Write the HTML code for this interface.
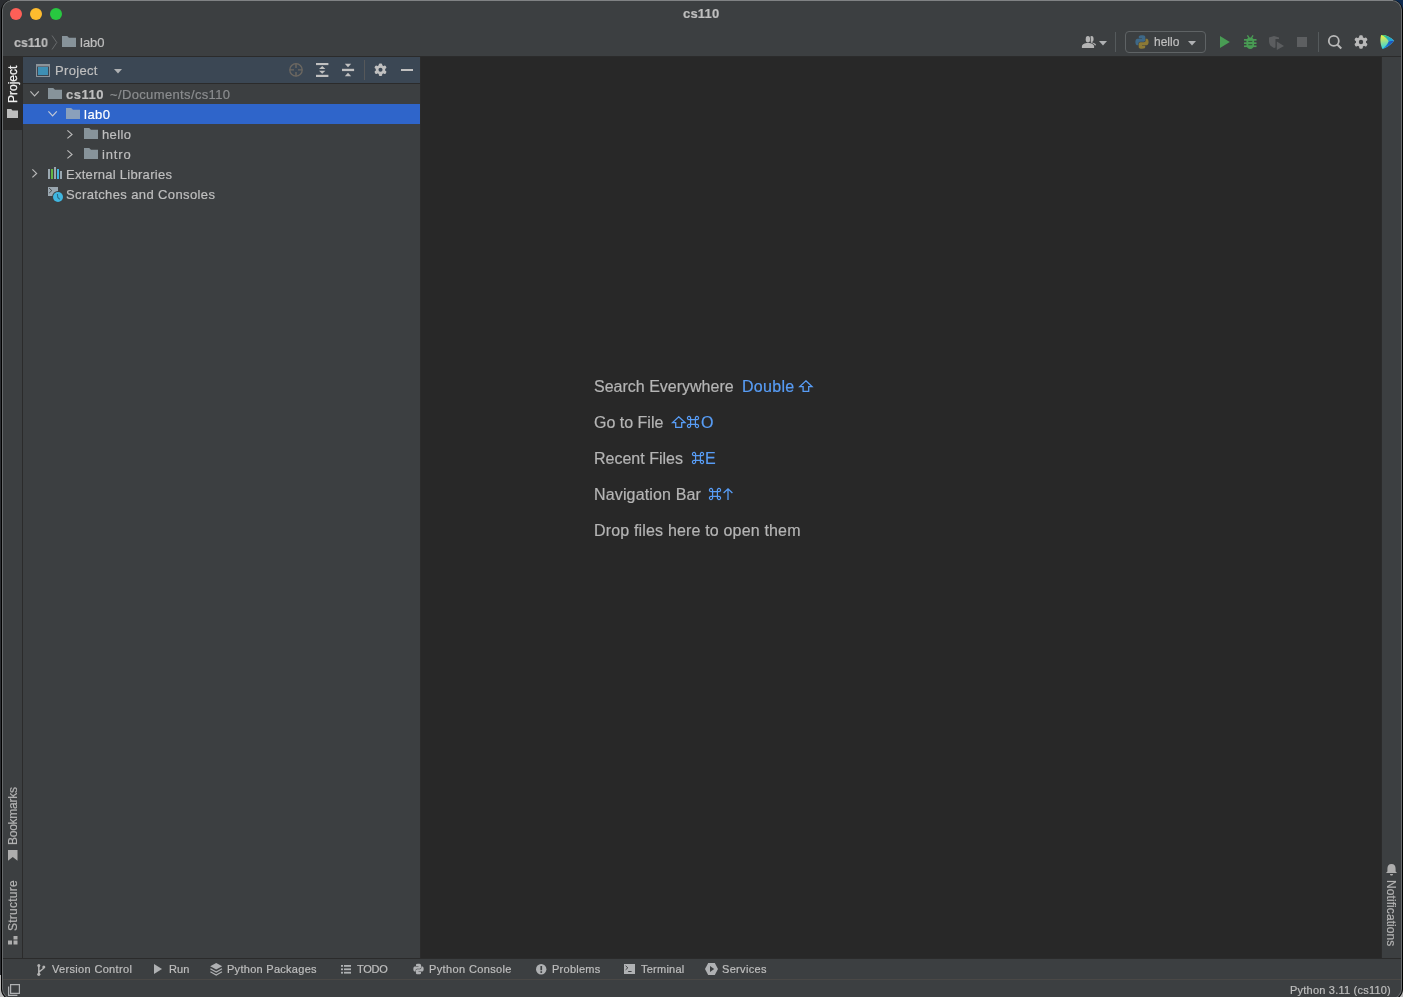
<!DOCTYPE html>
<html><head><meta charset="utf-8">
<style>
*{margin:0;padding:0;box-sizing:border-box}
html,body{width:1403px;height:997px;overflow:hidden;background:#2a2c30;font-family:"Liberation Sans",sans-serif;position:relative}
.r{position:absolute}
.t{position:absolute;white-space:nowrap;color:#bfbfbf;line-height:1;will-change:transform;-webkit-text-stroke:0.2px currentColor}
.s11{font-size:11px}
.s13{font-size:13px}
.s16{font-size:16px}
.bl{color:#589df6}
svg{position:absolute;overflow:visible}
</style></head><body>
<!-- desktop edge bits -->
<div class="r" style="left:0;top:975px;width:1403px;height:22px;background:#b9b9b9"></div>
<div class="r" style="left:1380px;top:0;width:23px;height:20px;background:#0d2a4f"></div>
<!-- window frame -->
<div class="r" style="left:1px;top:0;width:1402px;height:1000px;background:#000;border-radius:11px"></div>
<div class="r" style="left:2px;top:0;width:1400px;height:999px;background:#66696b;border-radius:10px"></div>
<div class="r" style="left:3px;top:1px;width:1398px;height:997px;background:#3c3f41;border-radius:9px"></div>
<div class="r" style="left:10px;top:0;width:1383px;height:1px;background:#808284"></div>

<!-- traffic lights -->
<svg style="left:0;top:0" width="80" height="28">
  <circle cx="16" cy="14" r="6" fill="#fe5f57"/>
  <circle cx="36" cy="14" r="6" fill="#febc2e"/>
  <circle cx="56" cy="14" r="6" fill="#28c840"/>
</svg>
<div class="t s13" style="left:683px;top:7px;font-weight:bold;letter-spacing:0.2px">cs110</div>

<!-- nav bar -->
<div class="t s13" style="left:14px;top:36px;font-weight:bold;transform:scaleX(0.957);transform-origin:0 0">cs110</div>
<svg style="left:51px;top:35px" width="8" height="16"><path d="M1 0.5 L5.8 7.5 L1 14.5" fill="none" stroke="#686b6d" stroke-width="1"/></svg>
<svg style="left:62px;top:36px" width="14" height="11"><path d="M0 0 H5.2 L7 1.8 H14 V11 H0 Z" fill="#87939a"/></svg>
<div class="t s13" style="left:80px;top:36px">lab0</div>

<!-- toolbar right -->
<svg style="left:1081px;top:36px" width="16" height="12" viewBox="0 0 16 12">
  <ellipse cx="10.7" cy="3" rx="1.9" ry="3" fill="#b4b4b4"/>
  <path d="M10.7 5 C10.7 6 11 6.3 12 6.7 C14 7.4 15 8 15 9.3 L13 9.5 L9 8 Z" fill="#b4b4b4"/>
  <ellipse cx="6.9" cy="3.2" rx="2.9" ry="3.9" fill="#3c3f41"/>
  <path d="M0.1 12.8 V10.5 C0.1 8 3 6.3 7 6.3 C11 6.3 13.9 8 13.9 10.5 V12.8 Z" fill="#3c3f41"/>
  <ellipse cx="6.9" cy="3.2" rx="2.2" ry="3.2" fill="#b4b4b4"/>
  <path d="M0.9 12 V10.5 C0.9 8.5 3.5 7.1 7 7.1 C10.5 7.1 13.1 8.5 13.1 10.5 V12 Z" fill="#b4b4b4"/>
</svg>
<svg style="left:1099px;top:41px" width="8" height="5"><path d="M0 0 H8 L4 4.5 Z" fill="#afb1b3"/></svg>
<div class="r" style="left:1115px;top:32px;width:1px;height:20px;background:#555a5c"></div>
<div class="r" style="left:1125px;top:31px;width:81px;height:22px;border:1px solid #5f6365;border-radius:4px"></div>
<svg style="left:1135px;top:35px" width="14" height="14" viewBox="0 0 14 14">
  <path d="M6.9 0.3 c-3.3 0 -3.1 1.4 -3.1 1.4 v1.5 h3.2 v0.5 H2.6 c0 0 -2.2 -0.2 -2.2 3.2 c0 3.4 1.9 3.3 1.9 3.3 h1.1 V8.6 c0 0 -0.1 -1.9 1.9 -1.9 h3.2 c0 0 1.8 0 1.8 -1.8 V2 c0 0 0.3 -1.7 -3.4 -1.7z" fill="#3e6887"/>
  <path d="M7.1 13.7 c3.3 0 3.1 -1.4 3.1 -1.4 v-1.5 H7 v-0.5 h4.4 c0 0 2.2 0.2 2.2 -3.2 c0 -3.4 -1.9 -3.3 -1.9 -3.3 h-1.1 v1.6 c0 0 0.1 1.9 -1.9 1.9 H5.5 c0 0 -1.8 0 -1.8 1.8 V12 c0 0 -0.3 1.7 3.4 1.7z" fill="#8b7936"/>
</svg>
<div class="t" style="font-size:12px;left:1153.5px;top:36px">hello</div>
<svg style="left:1188px;top:41px" width="8" height="5"><path d="M0 0 H8 L4 4.5 Z" fill="#afb1b3"/></svg>
<svg style="left:1220px;top:36px" width="10" height="12"><path d="M0 0 L9.8 6 L0 12 Z" fill="#499c54"/></svg>
<svg style="left:1244px;top:35px" width="13" height="14" viewBox="0 0 13 14">
  <path d="M3.4 0.4 L5.2 3.2 M9.1 0.4 L7.3 3.2" stroke="#499c54" stroke-width="1.3" fill="none"/>
  <path d="M6.25 2.6 C8.7 2.6 10.1 4 10.1 5.8 V10 C10.1 12.3 8.4 14 6.25 14 C4.1 14 2.4 12.3 2.4 10 V5.8 C2.4 4 3.8 2.6 6.25 2.6Z" fill="#499c54"/>
  <rect x="0" y="4" width="12.5" height="1.7" fill="#499c54"/>
  <rect x="0" y="7.3" width="12.5" height="1.7" fill="#499c54"/>
  <rect x="0" y="10.4" width="12.5" height="1.7" fill="#499c54"/>
  <rect x="4.3" y="5.9" width="4" height="1.1" fill="#35573b"/>
  <rect x="4.3" y="9.1" width="4" height="1.1" fill="#35573b"/>
</svg>
<svg style="left:1269px;top:36px" width="15" height="14" viewBox="0 0 15 14">
  <path d="M0 1.5 L5 0 L10 1.5 V3 H6.5 V11.5 L5 12 C2 10.8 0 8.5 0 5.2 Z" fill="#5b5d5f"/>
  <path d="M7.8 5.6 L15 10 L7.8 14 Z" fill="#5b5d5f"/>
</svg>
<div class="r" style="left:1297px;top:37px;width:10px;height:10px;background:#5d5f61"></div>
<div class="r" style="left:1318px;top:32px;width:1px;height:20px;background:#555a5c"></div>
<svg style="left:1327px;top:34px" width="16" height="16" viewBox="0 0 16 16">
  <circle cx="6.8" cy="6.9" r="5" fill="none" stroke="#b9b9b9" stroke-width="1.8"/>
  <path d="M10.3 10.5 L14.3 14.5" stroke="#b9b9b9" stroke-width="2"/>
</svg>
<svg style="left:1354px;top:35px" width="14" height="14" viewBox="0 0 14 14">
  <g fill="#b9b9b9"><circle cx="7" cy="7" r="5.1"/>
  <rect x="5.2" y="0.2" width="3.6" height="13.6" rx="1.2"/>
  <rect x="5.2" y="0.2" width="3.6" height="13.6" rx="1.2" transform="rotate(60 7 7)"/>
  <rect x="5.2" y="0.2" width="3.6" height="13.6" rx="1.2" transform="rotate(120 7 7)"/></g>
  <circle cx="7" cy="7" r="2.2" fill="#3c3f41"/>
</svg>
<svg style="left:1380px;top:34px" width="15" height="15" viewBox="0 0 15 15">
  <defs>
    <linearGradient id="lg1" x1="0.2" y1="0" x2="0.4" y2="1"><stop offset="0" stop-color="#f2f03c"/><stop offset="0.45" stop-color="#9be08a"/><stop offset="1" stop-color="#20d0e8"/></linearGradient>
    <linearGradient id="lg2" x1="0" y1="0" x2="1" y2="0.6"><stop offset="0" stop-color="#30d070"/><stop offset="1" stop-color="#1a9be8"/></linearGradient>
    <linearGradient id="lg3" x1="1" y1="0" x2="0" y2="1"><stop offset="0" stop-color="#1d48b8"/><stop offset="1" stop-color="#1890e0"/></linearGradient>
  </defs>
  <path d="M1.2 1 C5 0.5 10 2.5 14.2 6.8 C10.5 11 6.5 14 2.5 15 C0.4 11 -0.3 5 1.2 1Z" fill="url(#lg1)"/>
  <path d="M1.2 1 C5 0.5 10 2.5 14.2 6.8 L8.7 7.2 C7 4.5 4.5 2 1.2 1Z" fill="url(#lg2)"/>
  <path d="M14.2 6.8 C10.5 11 6.5 14 2.5 15 C5.5 12.5 7.8 10 8.7 7.2Z" fill="url(#lg3)"/>
</svg>

<!-- top line under nav -->
<div class="r" style="left:3px;top:56px;width:1398px;height:1px;background:#2b2b2b"></div>

<!-- left stripe -->
<div class="r" style="left:3px;top:57px;width:19px;height:73px;background:#2c2c2c"></div>
<div class="r" style="left:22px;top:57px;width:1px;height:901px;background:#2b2b2b"></div>
<div class="t" style="font-size:12px;left:6.8px;top:103px;color:#f0f0f0;-webkit-text-stroke:0.25px #f0f0f0;transform:rotate(-90deg);transform-origin:0 0">Project</div>
<svg style="left:7px;top:109px" width="11" height="9"><path d="M0 0 H4.2 L5.5 1.6 H11 V9 H0 Z" fill="#bdbdbd"/></svg>

<div class="t" style="font-size:12px;left:6.6px;top:844.8px;color:#b3b3b3;letter-spacing:-0.25px;transform:rotate(-90deg);transform-origin:0 0">Bookmarks</div>
<svg style="left:7.6px;top:850px" width="10" height="11" viewBox="0 0 10 11"><path d="M0 0 H9.5 V10.7 L4.75 7 L0 10.7 Z" fill="#adadad"/></svg>
<div class="t" style="font-size:12px;left:6.6px;top:931px;color:#b3b3b3;letter-spacing:0.25px;transform:rotate(-90deg);transform-origin:0 0">Structure</div>
<svg style="left:8px;top:935px" width="10" height="10"><rect x="0" y="5.5" width="4" height="4" fill="#adadad"/><rect x="5.5" y="5.5" width="4" height="4" fill="#adadad"/><rect x="5.5" y="1" width="4" height="3.5" fill="#adadad"/></svg>

<!-- project panel header -->
<div class="r" style="left:23px;top:57px;width:397px;height:26px;background:#3b4754"></div>
<div class="r" style="left:23px;top:83px;width:397px;height:1px;background:#2b2b2b"></div>
<svg style="left:36px;top:64px" width="14" height="13"><rect x="0.5" y="0.5" width="13" height="12" fill="none" stroke="#8c9399"/><rect x="1" y="1" width="12" height="1.5" fill="#8c9399"/><rect x="2" y="3" width="10" height="8" fill="#3e8fb4"/></svg>
<div class="t s13" style="left:55px;top:64px;letter-spacing:0.33px">Project</div>
<svg style="left:114px;top:69px" width="8" height="5"><path d="M0 0 H8 L4 4.6 Z" fill="#afb1b3"/></svg>
<svg style="left:289px;top:63px" width="14" height="14" viewBox="0 0 14 14">
  <circle cx="7" cy="6.9" r="6.2" fill="none" stroke="#6d6861" stroke-width="1.3"/>
  <path d="M7 0.8 V5 M7 9 V13.2 M0.8 6.9 H5 M9 6.9 H13.2" stroke="#6d6861" stroke-width="1.4"/>
</svg>
<svg style="left:316px;top:63px" width="13" height="14" viewBox="0 0 13 14">
  <rect x="0" y="0" width="12.4" height="2.1" fill="#c0c0c0"/><rect x="0" y="11.8" width="12.4" height="2.2" fill="#c0c0c0"/>
  <path d="M6.2 2.9 L9.4 6.1 H3 Z M6.2 10.8 L9.4 7.7 H3 Z" fill="#c0c0c0"/>
</svg>
<svg style="left:342px;top:63px" width="13" height="14" viewBox="0 0 13 14">
  <rect x="0" y="5.8" width="12.1" height="2.3" fill="#c0c0c0"/>
  <path d="M6 4.2 L9.2 0.8 H2.8 Z M6 9.8 L9.2 13.2 H2.8 Z" fill="#c0c0c0"/>
</svg>
<div class="r" style="left:364px;top:60px;width:1px;height:20px;background:#56585a"></div>
<svg style="left:374px;top:63.2px" width="13" height="13.5" viewBox="0 0 14 14">
  <g fill="#c0c0c0"><circle cx="7" cy="7" r="5.1"/>
  <rect x="5.2" y="0.2" width="3.6" height="13.6" rx="1.2"/>
  <rect x="5.2" y="0.2" width="3.6" height="13.6" rx="1.2" transform="rotate(60 7 7)"/>
  <rect x="5.2" y="0.2" width="3.6" height="13.6" rx="1.2" transform="rotate(120 7 7)"/></g>
  <circle cx="7" cy="7" r="2.2" fill="#3b4754"/>
</svg>
<div class="r" style="left:401px;top:69px;width:12px;height:2px;background:#c0c0c0"></div>

<!-- tree -->
<div class="r" style="left:23px;top:104px;width:397px;height:20px;background:#2f65ca"></div>
<svg style="left:30px;top:91px" width="10" height="6"><path d="M0.4 0.4 L4.6 4.8 L8.8 0.4" fill="none" stroke="#b9b9b9" stroke-width="1.2"/></svg>
<svg style="left:48px;top:88px" width="14" height="11"><path d="M0 0 H5.2 L7 1.8 H14 V11 H0 Z" fill="#87939a"/></svg>
<div class="t s13" style="left:66px;top:88px;font-weight:bold;letter-spacing:0.5px">cs110</div>
<div class="t s13" style="left:110px;top:88px;color:#8b8d8f;letter-spacing:0.36px">~/Documents/cs110</div>

<svg style="left:48px;top:111px" width="10" height="6"><path d="M0.4 0.4 L4.6 4.8 L8.8 0.4" fill="none" stroke="#c3c9d6" stroke-width="1.2"/></svg>
<svg style="left:66px;top:108px" width="14" height="11"><path d="M0 0 H5.2 L7 1.8 H14 V11 H0 Z" fill="#8aa0bb"/></svg>
<div class="t s13" style="left:84px;top:108px;color:#ffffff;letter-spacing:0.5px">lab0</div>

<svg style="left:67px;top:130px" width="6" height="9"><path d="M0.4 0.4 L5 4.4 L0.4 8.4" fill="none" stroke="#b9b9b9" stroke-width="1.2"/></svg>
<svg style="left:84px;top:128px" width="14" height="11"><path d="M0 0 H5.2 L7 1.8 H14 V11 H0 Z" fill="#87939a"/></svg>
<div class="t s13" style="left:102px;top:128px;letter-spacing:0.35px">hello</div>

<svg style="left:67px;top:150px" width="6" height="9"><path d="M0.4 0.4 L5 4.4 L0.4 8.4" fill="none" stroke="#b9b9b9" stroke-width="1.2"/></svg>
<svg style="left:84px;top:148px" width="14" height="11"><path d="M0 0 H5.2 L7 1.8 H14 V11 H0 Z" fill="#87939a"/></svg>
<div class="t s13" style="left:102px;top:148px;letter-spacing:0.85px">intro</div>

<svg style="left:31.8px;top:169px" width="6" height="9"><path d="M0.4 0.4 L4.6 4.4 L0.4 8.4" fill="none" stroke="#b9b9b9" stroke-width="1.2"/></svg>
<svg style="left:48px;top:167px" width="15" height="12">
  <rect x="0" y="2" width="2" height="10" fill="#9aa7b0"/><rect x="3" y="2" width="2" height="10" fill="#62b543"/>
  <rect x="6" y="0" width="2" height="12" fill="#9aa7b0"/><rect x="9" y="2" width="2" height="10" fill="#40b6e0"/>
  <rect x="12" y="4" width="2" height="8" fill="#9aa7b0"/>
</svg>
<div class="t s13" style="left:66px;top:168px;letter-spacing:0.28px">External Libraries</div>

<svg style="left:48px;top:187px" width="16" height="16" viewBox="0 0 16 16">
  <path d="M0 0 H10 V9 H0 Z" fill="#9aa7b0"/>
  <path d="M1.2 1.2 L3.8 3.6 L1.2 6" stroke="#3c3f41" fill="none" stroke-width="0.9"/>
  <circle cx="10" cy="10" r="5.9" fill="#3c3f41"/>
  <circle cx="10" cy="10" r="5" fill="#40b6e0"/>
  <path d="M9.4 7 L9.8 10.5 L11.8 12.3" stroke="#2a6d86" stroke-width="1.1" fill="none"/>
</svg>
<div class="t s13" style="left:66px;top:188px;letter-spacing:0.38px">Scratches and Consoles</div>

<!-- divider -->
<div class="r" style="left:420px;top:57px;width:1px;height:901px;background:#2b2b2b"></div>

<!-- editor -->
<div class="r" style="left:421px;top:57px;width:960px;height:901px;background:#282828"></div>

<div class="t s16" style="left:593.6px;top:379px;color:#b5b5b5">Search Everywhere</div>
<div class="t s16 bl" style="left:741.5px;top:379px;letter-spacing:0.3px">Double</div>
<svg style="left:799px;top:380px" width="14" height="12" viewBox="0 0 14 12"><path d="M6.9 0.8 L13 6.6 H9.7 V11.3 H4.1 V6.6 H0.8 Z" fill="none" stroke="#589df6" stroke-width="1.3" stroke-linejoin="miter"/></svg>

<div class="t s16" style="left:594px;top:415px;color:#b5b5b5">Go to File</div>
<svg style="left:672px;top:416px" width="14" height="12" viewBox="0 0 14 12"><path d="M6.7 0.8 L13 6.6 H9.7 V11.3 H3.7 V6.6 H0.6 Z" fill="none" stroke="#589df6" stroke-width="1.3"/></svg>
<svg style="left:687px;top:416px" width="12" height="12" viewBox="0 0 12 12" id="cmd1"><path d="M3.6 3.6 H8.4 V8.4 H3.6 Z M3.6 3.6 H2.3 A1.6 1.6 0 1 1 3.6 2.3 Z M8.4 3.6 V2.3 A1.6 1.6 0 1 1 9.7 3.6 Z M8.4 8.4 H9.7 A1.6 1.6 0 1 1 8.4 9.7 Z M3.6 8.4 V9.7 A1.6 1.6 0 1 1 2.3 8.4 Z" fill="none" stroke="#589df6" stroke-width="1.2"/></svg>
<div class="t s16 bl" style="left:701px;top:415px">O</div>

<div class="t s16" style="left:593.5px;top:451px;color:#b5b5b5">Recent Files</div>
<svg style="left:692px;top:452px" width="12" height="12" viewBox="0 0 12 12"><path d="M3.6 3.6 H8.4 V8.4 H3.6 Z M3.6 3.6 H2.3 A1.6 1.6 0 1 1 3.6 2.3 Z M8.4 3.6 V2.3 A1.6 1.6 0 1 1 9.7 3.6 Z M8.4 8.4 H9.7 A1.6 1.6 0 1 1 8.4 9.7 Z M3.6 8.4 V9.7 A1.6 1.6 0 1 1 2.3 8.4 Z" fill="none" stroke="#589df6" stroke-width="1.2"/></svg>
<div class="t s16 bl" style="left:705px;top:451px">E</div>

<div class="t s16" style="left:593.5px;top:487px;color:#b5b5b5;letter-spacing:0.15px">Navigation Bar</div>
<svg style="left:709px;top:488px" width="12" height="12" viewBox="0 0 12 12"><path d="M3.6 3.6 H8.4 V8.4 H3.6 Z M3.6 3.6 H2.3 A1.6 1.6 0 1 1 3.6 2.3 Z M8.4 3.6 V2.3 A1.6 1.6 0 1 1 9.7 3.6 Z M8.4 8.4 H9.7 A1.6 1.6 0 1 1 8.4 9.7 Z M3.6 8.4 V9.7 A1.6 1.6 0 1 1 2.3 8.4 Z" fill="none" stroke="#589df6" stroke-width="1.2"/></svg>
<svg style="left:723px;top:488px" width="10" height="12" viewBox="0 0 10 12"><path d="M5 0.8 V12 M0.6 5 L5 0.8 L9.4 5" fill="none" stroke="#589df6" stroke-width="1.3"/></svg>

<div class="t s16" style="left:593.5px;top:523px;color:#b5b5b5;letter-spacing:0.17px">Drop files here to open them</div>

<!-- right stripe -->
<div class="r" style="left:1381px;top:57px;width:1px;height:901px;background:#2b2b2b"></div>
<div class="r" style="left:1382px;top:57px;width:19px;height:901px;background:#3c3f41"></div>
<svg style="left:1386px;top:864px" width="11" height="12" viewBox="0 0 11 12"><path d="M5.5 0 C8.3 0 9.6 2 9.6 4.8 V7.6 L11 9 H0 L1.4 7.6 V4.8 C1.4 2 2.7 0 5.5 0Z M4 10 H7 C7 11 6.3 11.6 5.5 11.6 C4.7 11.6 4 11 4 10Z" fill="#adadad"/></svg>
<div class="t" style="font-size:12px;left:1397px;top:879.5px;color:#b3b3b3;letter-spacing:0.08px;transform:rotate(90deg);transform-origin:0 0">Notifications</div>

<!-- bottom tool bar -->
<div class="r" style="left:3px;top:958px;width:1398px;height:1px;background:#2b2b2b"></div>
<svg style="left:37px;top:964px" width="9" height="12" viewBox="0 0 9 12">
  <circle cx="1.8" cy="1.5" r="1.5" fill="#b4b4b4"/><circle cx="1.8" cy="10.3" r="1.6" fill="#b4b4b4"/><circle cx="6.8" cy="3" r="1.5" fill="#b4b4b4"/>
  <path d="M1.8 1.5 V10.3 M6.8 3 C6.8 6.3 2.5 6.3 1.8 8.5" stroke="#b4b4b4" stroke-width="1.5" fill="none"/>
</svg>
<div class="t s11" style="left:52px;top:964px;letter-spacing:0.33px">Version Control</div>
<svg style="left:154px;top:964px" width="8" height="10"><path d="M0 0 L8 5 L0 10 Z" fill="#afb1b3"/></svg>
<div class="t s11" style="left:169px;top:964px;letter-spacing:0.15px">Run</div>
<svg style="left:210px;top:963px" width="13" height="13" viewBox="0 0 13 13">
  <path d="M6.2 0 L12.2 3.2 L6.2 6.4 L0.2 3.2 Z" fill="#afb1b3"/>
  <path d="M0.4 5.8 L6.2 9 L12 5.8 M0.4 8.8 L6.2 12 L12 8.8" stroke="#afb1b3" stroke-width="1.2" fill="none"/>
</svg>
<div class="t s11" style="left:227px;top:964px;letter-spacing:0.28px">Python Packages</div>
<svg style="left:341px;top:965px" width="10" height="9" viewBox="0 0 10 9">
  <g fill="#afb1b3"><rect x="0" y="0" width="2" height="1.8"/><rect x="3" y="0" width="7" height="1.8"/>
  <rect x="0" y="3.4" width="2" height="1.8"/><rect x="3" y="3.4" width="7" height="1.8"/>
  <rect x="0" y="6.8" width="2" height="1.8"/><rect x="3" y="6.8" width="7" height="1.8"/></g>
</svg>
<div class="t s11" style="left:357px;top:964px;letter-spacing:-0.27px">TODO</div>
<svg style="left:413px;top:963px" width="11" height="12" viewBox="0 0 14 14">
  <path d="M6.9 0.3 c-3.3 0 -3.1 1.4 -3.1 1.4 v1.5 h3.2 v0.5 H2.6 c0 0 -2.2 -0.2 -2.2 3.2 c0 3.4 1.9 3.3 1.9 3.3 h1.1 V8.6 c0 0 -0.1 -1.9 1.9 -1.9 h3.2 c0 0 1.8 0 1.8 -1.8 V2 c0 0 0.3 -1.7 -3.4 -1.7z" fill="#afb1b3"/>
  <path d="M7.1 13.7 c3.3 0 3.1 -1.4 3.1 -1.4 v-1.5 H7 v-0.5 h4.4 c0 0 2.2 0.2 2.2 -3.2 c0 -3.4 -1.9 -3.3 -1.9 -3.3 h-1.1 v1.6 c0 0 0.1 1.9 -1.9 1.9 H5.5 c0 0 -1.8 0 -1.8 1.8 V12 c0 0 -0.3 1.7 3.4 1.7z" fill="#afb1b3"/>
</svg>
<div class="t s11" style="left:429px;top:964px;letter-spacing:0.37px">Python Console</div>
<svg style="left:536px;top:964px" width="11" height="11"><circle cx="5.2" cy="5.2" r="5.2" fill="#afb1b3"/><rect x="4.4" y="2" width="1.7" height="4.3" fill="#3c3f41"/><rect x="4.4" y="7.2" width="1.7" height="1.7" fill="#3c3f41"/></svg>
<div class="t s11" style="left:552px;top:964px;letter-spacing:0.26px">Problems</div>
<svg style="left:624px;top:964px" width="11" height="10"><rect x="0" y="0" width="11" height="10" fill="#afb1b3"/><path d="M1.6 1.8 L3.8 3.8 L1.6 5.8" stroke="#3c3f41" stroke-width="1" fill="none"/><rect x="4.2" y="7" width="3.4" height="1" fill="#3c3f41"/></svg>
<div class="t s11" style="left:641px;top:964px;letter-spacing:0.24px">Terminal</div>
<svg style="left:705px;top:963px" width="13" height="12" viewBox="0 0 13 12"><path d="M3.2 0 H9.8 L13 6 L9.8 12 H3.2 L0 6 Z" fill="#afb1b3"/><path d="M5 3 L9.2 6 L5 9 Z" fill="#3c3f41"/></svg>
<div class="t s11" style="left:722px;top:964px;letter-spacing:0.33px">Services</div>

<!-- status bar -->
<div class="r" style="left:3px;top:979px;width:1398px;height:1px;background:#4a4846"></div>
<svg style="left:8px;top:984px" width="12" height="12" viewBox="0 0 12 12"><path d="M2.6 0.6 H11.4 V9.4 H2.6 Z" fill="none" stroke="#afb1b3" stroke-width="1.2"/><path d="M0.6 2.6 V11.4 H9.4" fill="none" stroke="#afb1b3" stroke-width="1.2"/></svg>
<div class="t s11" style="left:1290px;top:985px;letter-spacing:0.22px">Python 3.11 (cs110)</div>

</body></html>
